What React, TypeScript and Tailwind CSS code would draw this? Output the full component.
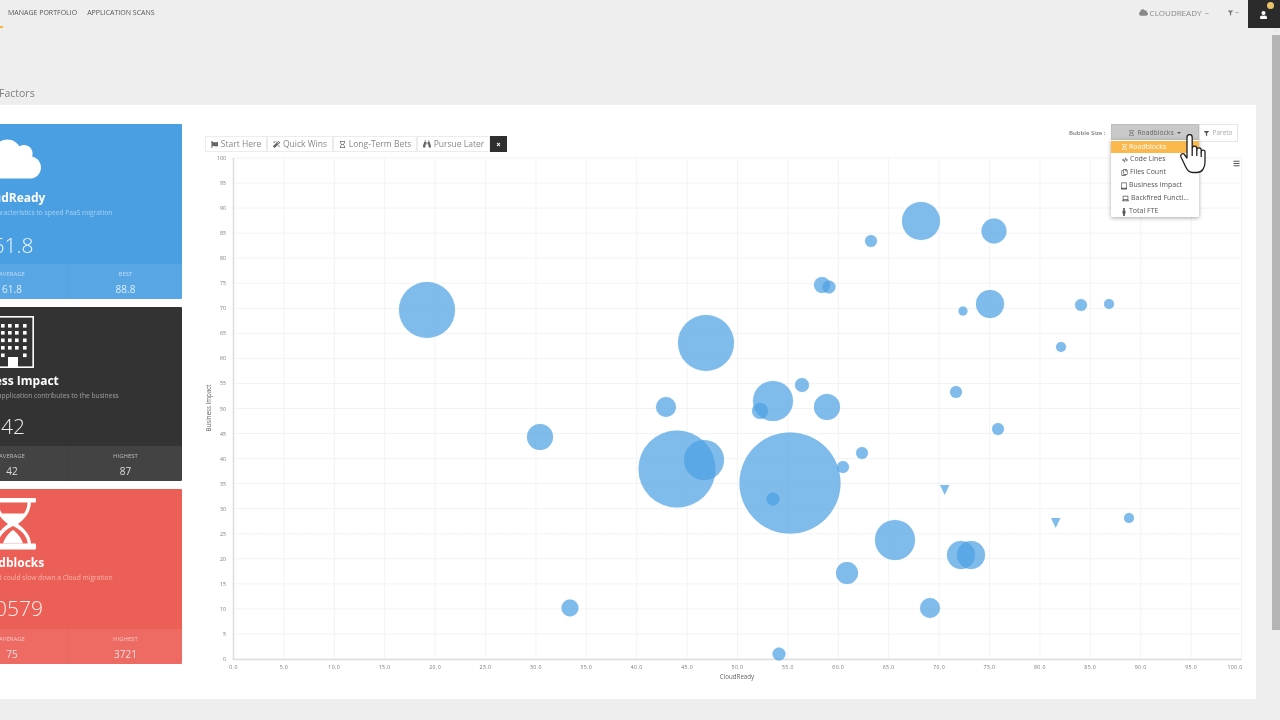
import {
  FaBars,
  FaBinoculars,
  FaChevronUp,
  FaCloud,
  FaCode,
  FaFilter,
  FaFlag,
  FaLaptop,
  FaMagic,
  FaMale,
  FaRegCopy,
  FaTimes,
  FaUser,
  FaRegHourglass,
  FaTabletAlt,
} from 'react-icons/fa'

const bubbles = [
  [427, 310, 28], [706, 343, 28], [921, 221, 19], [994, 231, 12.5], [871, 241, 6],
  [822, 285, 8], [829, 287, 6.5], [963, 311, 4.5], [990, 304, 14], [1081, 305, 6],
  [1109, 304, 5], [1061, 347, 5], [956, 392, 6], [802, 385, 7], [773, 401, 20],
  [760, 411, 8], [827, 407, 13], [666, 407, 10], [540, 437, 13], [677, 469, 38.5],
  [704, 460, 20], [790, 483, 50.5], [773, 499, 6.5], [843, 467, 6], [862, 453, 6],
  [998, 429, 6], [895, 540, 20], [961, 555, 14], [971, 555, 14], [847, 573, 11],
  [930, 608, 10], [570, 608, 8.5], [779, 654, 6.5], [1129, 518, 5],
]

const ticks = Array.from({ length: 21 }, (_, i) => i * 5)
const xPos = (v: number) => 233.5 + v * 10.08
const yPos = (v: number) => 659 - v * 5.01

const BuildingIcon = () => {
  const cols = [2, 9, 16, 23, 31]
  const rows = [8, 15, 22.5, 30]
  return (
    <svg viewBox="0 0 42 52" className="w-[42px] h-[52px]" fill="white">
      <rect x="0.8" y="0.8" width="40.4" height="50.4" fill="none" stroke="white" strokeWidth="1.6" />
      {rows.map((r) => cols.map((c) => <rect key={`${r}-${c}`} x={c} y={r} width="3.6" height="3.6" />))}
      <rect x="2" y="37.5" width="3.6" height="3.6" />
      <rect x="9" y="37.5" width="3.6" height="3.6" />
      <rect x="31" y="37.5" width="3.6" height="3.6" />
      <rect x="16" y="41" width="10" height="11" />
    </svg>
  )
}

const HourglassIcon = () => (
  <svg viewBox="0 0 46 52" className="w-[46px] h-[52px]">
    <path d="M5 3 H41 C41 13 36 20 28 26 C36 32 41 38 41 47 H5 C5 38 10 32 18 26 C10 20 5 13 5 3 Z" fill="white" />
    <rect x="0" y="0" width="46" height="4.5" rx="1" fill="white" />
    <rect x="0" y="45.5" width="46" height="6" rx="1" fill="white" />
    <path d="M8.5 4.5 H37.5 C37.5 9 36 12.5 34 15.5 H12 C10 12.5 8.5 9 8.5 4.5 Z" fill="#ec5f56" />
    <path d="M23 28 C31 32 36.5 37 37.8 45.5 H8.2 C9.5 37 15 32 23 28 Z" fill="#ec5f56" />
    <path d="M23 32 C27 34.5 31.5 40 33 45.5 H13 C14.5 40 19 34.5 23 32 Z" fill="white" />
  </svg>
)

const cards = [
  {
    bg: 'bg-[#4a9fe2]',
    h: 'h-[175px]',
    valueMt: 'mt-[14px]',
    icon: <FaCloud className="w-[56px] h-[46px]" />,
    title: 'CloudReady',
    desc: 'Cloud characteristics to speed PaaS migration',
    value: '61.8',
    avg: '61.8',
    label: 'BEST',
    high: '88.8',
  },
  {
    bg: 'bg-[#333333]',
    h: 'h-[174px]',
    valueMt: 'mt-[12px]',
    icon: <BuildingIcon />,
    title: 'Business Impact',
    desc: 'How the application contributes to the business',
    value: '42',
    avg: '42',
    label: 'HIGHEST',
    high: '87',
  },
  {
    bg: 'bg-[#ec5f56]',
    h: 'h-[175px]',
    valueMt: 'mt-[12px]',
    icon: <HourglassIcon />,
    title: 'Roadblocks',
    desc: 'Items that could slow down a Cloud migration',
    value: '10579',
    avg: '75',
    label: 'HIGHEST',
    high: '3721',
  },
]

const legend = [
  { icon: <FaFlag className="w-[7px] h-[7px]" />, text: 'Start Here', w: 'w-[62px]' },
  { icon: <FaMagic className="w-[7px] h-[7px]" />, text: 'Quick Wins', w: 'w-[66px]' },
  { icon: <FaRegHourglass className="w-[7px] h-[7px]" />, text: 'Long-Term Bets', w: 'w-[84px]' },
  { icon: <FaBinoculars className="w-[8px] h-[8px]" />, text: 'Pursue Later', w: 'w-[73px]' },
]

const menu = [
  { icon: <FaCode className="w-[6px] h-[6px]" />, text: 'Code Lines', pl: 'pl-[11px]' },
  { icon: <FaRegCopy className="w-[7px] h-[7px]" />, text: 'Files Count', pl: 'pl-[10px]' },
  { icon: <FaTabletAlt className="w-[6px] h-[8px]" />, text: 'Business Impact', pl: 'pl-[10px]' },
  { icon: <FaLaptop className="w-[7px] h-[7px]" />, text: 'Backfired Functi...', pl: 'pl-[11px]' },
  { icon: <FaMale className="w-[6px] h-[8px]" />, text: 'Total FTE', pl: 'pl-[10px]' },
]

function Card({ card }: { card: (typeof cards)[number] }) {
  return (
    <div className={`${card.bg} ${card.h} flex flex-col text-white rounded-[1px]`}>
      <div className="w-[114px] h-[62px] mt-[4px] flex items-center justify-center">{card.icon}</div>
      <div className="w-[108px] h-[15px] flex justify-center items-center whitespace-nowrap text-[12px] font-bold">
        {card.title}
      </div>
      <div className="pl-[14px] mt-[3px] h-[10px] leading-[10px] whitespace-nowrap text-[6.7px] opacity-50">{card.desc}</div>
      <div className={`w-[114px] ${card.valueMt} h-[28px] flex justify-center items-center text-[21px] font-light opacity-90`}>
        {card.value}
      </div>
      <div className="mt-auto h-[35px] grid grid-cols-2 bg-white/[0.08] text-center">
        <div className="border-r border-black/[0.03] pt-[6px]">
          <div className="text-[6px] leading-[8px] opacity-60">AVERAGE</div>
          <div className="text-[10px] leading-[14px] mt-[4px] opacity-80">{card.avg}</div>
        </div>
        <div className="pt-[6px]">
          <div className="text-[6px] leading-[8px] opacity-60">{card.label}</div>
          <div className="text-[10px] leading-[14px] mt-[4px] opacity-80">{card.high}</div>
        </div>
      </div>
    </div>
  )
}

function Chart() {
  return (
    <svg viewBox="200 150 1056 540" className="w-[1056px] h-[540px] block">
      {ticks.map((t) => (
        <g key={t}>
          <line x1={xPos(t)} x2={xPos(t)} y1={158} y2={659} stroke="#f3f3f6" strokeWidth={1} />
          <line x1={233} x2={1242} y1={yPos(t)} y2={yPos(t)} stroke="#f3f3f6" strokeWidth={1} />
          <text x={t === 100 ? 1235 : xPos(t)} y={669} textAnchor="middle" fontSize={5.2} fill="#777" letterSpacing={0.4}>
            {t.toFixed(1)}
          </text>
          <text x={226} y={yPos(t) + 2} textAnchor="end" fontSize={5.2} fill="#777">
            {t}
          </text>
        </g>
      ))}
      <line x1={233.5} x2={233.5} y1={158} y2={660} stroke="#dddddd" strokeWidth={1.5} />
      <line x1={233} x2={1242} y1={659.5} y2={659.5} stroke="#dddddd" strokeWidth={1.5} />
      <text x={737} y={679} textAnchor="middle" fontSize={6.2} fill="#666">CloudReady</text>
      <text x={0} y={0} transform="translate(211 408) rotate(-90)" textAnchor="middle" fontSize={6.2} fill="#666">
        Business Impact
      </text>
      {bubbles.map(([x, y, r], i) => (
        <circle key={i} cx={x} cy={y} r={r} fill="#4a9fe2" fillOpacity={0.7} stroke="#4a9fe2" strokeOpacity={0.15} />
      ))}
      <polygon points="940,485 949.5,485 944.7,495" fill="#4a9fe2" fillOpacity={0.7} />
      <polygon points="1051,518 1060.5,518 1055.7,528" fill="#4a9fe2" fillOpacity={0.7} />
    </svg>
  )
}

const HandCursor = () => (
  <svg viewBox="0 0 26 40" className="absolute left-[980px] top-[29px] w-[26px] h-[40px]" fill="white" stroke="#222" strokeWidth="1.3" strokeLinejoin="round">
    <path d="M7 24 V3.2 a2.6 2.6 0 0 1 5.2 0 V14.5 a2.3 2.3 0 0 1 4.6 0 V16 a2.2 2.2 0 0 1 4.4 0 V18 a1.9 1.9 0 0 1 3.8 0 V28 c0 6 -3 10.5 -8 10.5 h-4 c-4 0 -5.5 -2 -7.5 -6 L1 23 c-1 -2 1 -4 3 -3 Z" />
    <path d="M12.2 14.5 V22 M16.8 16 V22 M21.2 18 V23" fill="none" />
  </svg>
)

export default function App() {
  return (
    <div className="relative w-[1280px] h-[720px] overflow-hidden bg-[#eeeeee] flex flex-col text-[#555] [font-family:'Open_Sans',sans-serif] blur-[0.35px]">
      <header className="h-[28px] shrink-0 flex">
        <nav className="pl-[8px] pt-[8px] flex gap-[10px] text-[7px] leading-[9px] text-[#555] whitespace-nowrap">
          <span>MANAGE PORTFOLIO</span>
          <span>APPLICATION SCANS</span>
        </nav>
        <div className="ml-auto flex items-start">
          <div className="pt-[8px] flex items-center gap-[2px] text-[8px] leading-[9px] text-[#888]">
            <FaCloud className="w-[9px] h-[9px]" />
            <span>CLOUDREADY</span>
            <span className="ml-[1px]">~</span>
          </div>
          <div className="ml-[19px] pt-[9px] flex items-center gap-[2px] text-[7px] leading-[7px] text-[#777]">
            <FaFilter className="w-[5px] h-[6px]" />
            <span>~</span>
          </div>
          <div className="relative ml-[9px] w-[32px] h-[28px] bg-[#2b2b2b] flex items-center justify-center text-white">
            <FaUser className="w-[7px] h-[8px] -ml-[1px] mt-[1px]" />
            <span className="absolute left-[19px] top-[2px] w-[7px] h-[7px] rounded-full bg-[#e9c46a]" />
          </div>
        </div>
      </header>

      <div className="absolute left-0 top-[26px] w-[3px] h-[2px] bg-[#f5b642]" />

      <h2 className="shrink-0 h-[77px] pt-[58px] -ml-[1px] text-[10.5px] leading-[14px] text-[#808080]">Factors</h2>

      <main className="w-[1256px] h-[594px] shrink-0 bg-white flex">
        <aside className="w-[226px] -ml-[44px] shrink-0 pt-[19px] flex flex-col gap-[8px]">
          {cards.map((c) => (
            <Card key={c.title} card={c} />
          ))}
        </aside>

        <section className="relative ml-[18px] flex-1 flex flex-col pt-[31px]">
          <div className="h-[16px] ml-[5px] flex text-[8.5px] text-[#888] shrink-0">
            {legend.map((l) => (
              <div key={l.text} className={`${l.w} flex items-center justify-center gap-[3px] border border-[#ececec] whitespace-nowrap`}>
                <span className="text-[#666]">{l.icon}</span>
                <span>{l.text}</span>
              </div>
            ))}
            <div className="w-[17px] bg-[#2f2f2f] text-white flex items-center justify-center">
              <FaTimes className="w-[5px] h-[5px]" />
            </div>
          </div>
          <div className="-mt-[2px]">
            <Chart />
          </div>

          <FaBars className="absolute left-[1032px] top-[55px] w-[9px] h-[7px] text-[#555]" />

          <div className="absolute left-[869px] top-[19px] h-[18px] flex items-center text-[6px] font-semibold text-[#777] whitespace-nowrap">
            Bubble Size :
          </div>
          <div className="absolute left-[911px] top-[19px] w-[88px] h-[18px] bg-[#c9c9c9] border border-[#bdbdbd] flex items-center justify-center gap-[3px] text-[6.8px] text-[#666]">
            <FaRegHourglass className="w-[5px] h-[6px]" />
            <span>Roadblocks</span>
            <span className="w-0 h-0 border-x-[2px] border-x-transparent border-t-[2px] border-t-[#555]" />
          </div>
          <div className="absolute left-[999px] top-[19px] w-[39px] h-[18px] border border-[#e6e6e6] bg-white flex items-center justify-center gap-[3px] text-[6.5px] text-[#aaa]">
            <FaFilter className="w-[5px] h-[5px] text-[#555]" />
            <span>Pareto</span>
          </div>

          <div className="absolute left-[911px] top-[35px] w-[88px] h-[77px] bg-white shadow-[0_1px_4px_rgba(0,0,0,0.35)] text-[7px] text-[#555] pt-[1px]">
            <div className="h-[12px] bg-[#fbb84c] text-white flex items-center gap-[2px] pl-[11px]">
              <FaRegHourglass className="w-[5px] h-[6px]" />
              <span>Roadblocks</span>
            </div>
            {menu.map((m) => (
              <div key={m.text} className={`h-[13px] flex items-center gap-[2px] whitespace-nowrap ${m.pl}`}>
                {m.icon}
                <span>{m.text}</span>
              </div>
            ))}
          </div>

          <HandCursor />
        </section>
      </main>

      <FaChevronUp className="absolute right-[2px] top-[29px] w-[4px] h-[3px] text-[#ccc]" />
      <div className="absolute right-0 top-[35px] w-[8px] h-[595px] bg-[#b4b4b4]" />
    </div>
  )
}
